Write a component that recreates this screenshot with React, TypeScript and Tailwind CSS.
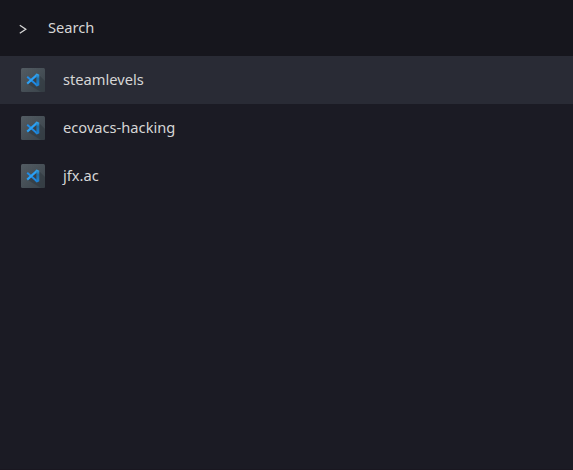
const items = ["steamlevels", "ecovacs-hacking", "jfx.ac"];

function CodeIcon() {
  return (
    <svg width="24" height="24" viewBox="0 0 24 24" className="shrink-0">
      <defs>
        <linearGradient id="tile" x1="0" y1="0" x2="1" y2="1">
          <stop offset="0" stopColor="#535c63" />
          <stop offset="1" stopColor="#3a434a" />
        </linearGradient>
        <linearGradient id="side" x1="0" y1="0" x2="0" y2="1">
          <stop offset="0" stopColor="#35aaf2" />
          <stop offset="0.4" stopColor="#1f6fa8" />
          <stop offset="1" stopColor="#1d86dc" />
        </linearGradient>
      </defs>
      <rect x="0" y="0" width="24" height="24" rx="1.5" fill="url(#tile)" />
      <path d="M18 7 24 13V22.5Q24 24 22.5 24H20L6 15.5 12 11Z" fill="#303940" opacity="0.6" />
      <path d="M6.2 8.7 16 17.2" fill="none" stroke="#1f8be6" strokeWidth="1.9" />
      <path d="M6.2 15.6 16.2 6.6" fill="none" stroke="#2ba0f5" strokeWidth="2.1" />
      <path d="M14.6 6.2 15.8 5.5 18.3 6.8V17.2L15.8 18.5 14.6 17.8 15.4 16V8Z" fill="url(#side)" />
    </svg>
  );
}

export default function App() {
  return (
    <div className="flex h-[470px] w-[573px] flex-col border-b border-[#191720] bg-[#1b1b24] font-['Noto_Sans',sans-serif] text-[14.667px] text-[#d6d6d6]">
      <header className="flex h-14 shrink-0 items-center bg-[#16161d] pl-[18px]">
        <svg width="10" height="12" viewBox="0 0 10 12" className="mr-5 mt-0.5">
          <path d="M1.8 2.2 7.8 6.2 1.8 10.2" fill="none" stroke="#d6d6d6" strokeWidth="1.3" />
        </svg>
        <span className="pb-0.5">Search</span>
      </header>
      {items.map((name, i) => (
        <div key={name} className={`flex h-12 items-center gap-[18px] pl-[21px] ${i === 0 ? "bg-[#292b35]" : ""}`}>
          <CodeIcon />
          <span className="pb-0.5">{name}</span>
        </div>
      ))}
    </div>
  );
}
